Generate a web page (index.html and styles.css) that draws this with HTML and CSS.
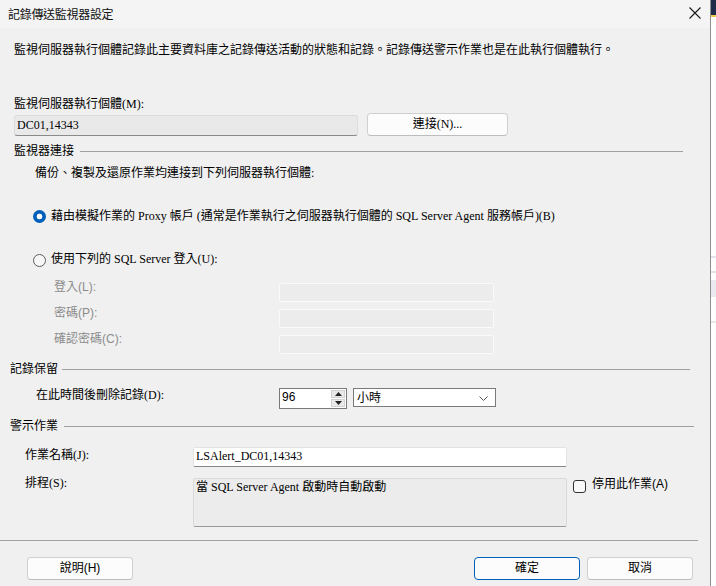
FILE: index.html
```html
<!DOCTYPE html>
<html lang="zh-Hant">
<head>
<meta charset="utf-8">
<title>記錄傳送監視器設定</title>
<link rel="stylesheet" href="styles.css">
</head>
<body>
<div class="screen">
  <div class="dialog">
    <div class="titlebar">
      <span class="title">記錄傳送監視器設定</span>
      <svg class="close" width="12" height="12" viewBox="0 0 12 12"><path d="M0.5 0.5 L11.5 11.5 M11.5 0.5 L0.5 11.5" stroke="#1a1a1a" stroke-width="1.1" fill="none"/></svg>
    </div>
    <div class="content">
      <p class="desc">監視伺服器執行個體記錄此主要資料庫之記錄傳送活動的狀態和記錄。記錄傳送警示作業也是在此執行個體執行。</p>
      <div class="label-m">監視伺服器執行個體(M):</div>
      <div class="server-row">
        <div class="readonly">DC01,14343</div>
        <div class="btn connect">連接(N)...</div>
      </div>

      <div class="group-head g1"><span>監視器連接</span></div>
      <div class="sub">備份、複製及還原作業均連接到下列伺服器執行個體:</div>
      <div class="radio-row r1">
        <span class="radio checked"></span>
        <span>藉由模擬作業的 Proxy 帳戶 (通常是作業執行之伺服器執行個體的 SQL Server Agent 服務帳戶)(B)</span>
      </div>
      <div class="radio-row r2">
        <span class="radio"></span>
        <span>使用下列的 SQL Server 登入(U):</span>
      </div>
      <div class="login-row first">
        <span class="dis-label">登入(L):</span>
        <span class="dis-input"></span>
      </div>
      <div class="login-row">
        <span class="dis-label">密碼(P):</span>
        <span class="dis-input"></span>
      </div>
      <div class="login-row">
        <span class="dis-label">確認密碼(C):</span>
        <span class="dis-input"></span>
      </div>

      <div class="group-head g2"><span>記錄保留</span></div>
      <div class="retain-row">
        <span class="retain-label">在此時間後刪除記錄(D):</span>
        <div class="spin">
          <span class="spin-value">96</span>
          <span class="spin-btns">
            <span class="spin-btn"><svg width="7" height="4" viewBox="0 0 7 4"><path d="M0 4 L3.5 0 L7 4 Z" fill="#222"/></svg></span>
            <span class="spin-btn"><svg width="7" height="4" viewBox="0 0 7 4"><path d="M0 0 L3.5 4 L7 0 Z" fill="#222"/></svg></span>
          </span>
        </div>
        <div class="combo">
          <span>小時</span>
          <svg width="9" height="5" viewBox="0 0 9 5"><path d="M0.5 0.5 L4.5 4.5 L8.5 0.5" stroke="#555" stroke-width="1" fill="none"/></svg>
        </div>
      </div>

      <div class="group-head g3"><span>警示作業</span></div>
      <div class="job-row">
        <span class="job-label">作業名稱(J):</span>
        <div class="job-input">LSAlert_DC01,14343</div>
      </div>
      <div class="sched-row">
        <span class="sched-label">排程(S):</span>
        <div class="sched-box">當 SQL Server Agent 啟動時自動啟動</div>
        <span class="checkbox"></span>
        <span class="check-text">停用此作業(A)</span>
      </div>
    </div>
    <div class="footer">
      <div class="sep"></div>
      <div class="buttons">
        <div class="btn help">說明(H)</div>
        <div class="btn ok">確定</div>
        <div class="btn cancel">取消</div>
      </div>
    </div>
  </div>
  <div class="backdrop">
    <div class="bd-top"></div>
    <div class="bd-yellow"></div>
    <div class="bd-line l1"></div>
    <div class="bd-line l2"></div>
    <div class="bd-block"></div>
    <div class="bd-line l3"></div>
  </div>
</div>
</body>
</html>
```

FILE: styles.css
```css
html, body {
  margin: 0;
  padding: 0;
  background: #ffffff;
}
body {
  font-family: "Liberation Serif", "Noto Sans CJK TC", serif;
  font-size: 12px;
  color: #000;
}
.screen {
  display: flex;
  width: 716px;
  height: 586px;
  overflow: hidden;
}
.dialog {
  width: 710px;
  flex: none;
  background: #f0f0f0;
  border-right: 1px solid #8e8e8e;
  display: flex;
  flex-direction: column;
}
.titlebar {
  height: 28px;
  background: #f4f4f4;
  display: flex;
  align-items: center;
  justify-content: space-between;
  padding: 0 9px 0 8px;
}
.title {
  font-family: "Noto Sans CJK TC", sans-serif;
  font-size: 12px;
  letter-spacing: -0.3px;
  color: #111;
  line-height: 16px;
}
.close {
  display: block;
  margin-top: -2px;
}
.content {
  display: flex;
  flex-direction: column;
  line-height: 16px;
}
.desc {
  margin: 14px 0 0 14px;
  line-height: 16px;
}
.label-m {
  margin: 38px 0 0 14px;
}
.server-row {
  margin: 1px 0 0 14px;
  display: flex;
  height: 23px;
}
.readonly {
  margin-top: 2px;
  width: 340px;
  height: 19px;
  background: #e9e9e9;
  border: 1px solid #dcdcdc;
  border-bottom-color: #8a8a8a;
  border-radius: 3px;
  padding-left: 2px;
  line-height: 18px;
}
.btn {
  height: 21px;
  border: 1px solid #d0d0d0;
  border-bottom-color: #bdbdbd;
  border-radius: 4px;
  background: #fcfcfc;
  text-align: center;
  line-height: 21px;
  font-family: "Liberation Sans", "Noto Sans CJK TC", sans-serif;
}
.connect {
  margin-left: 9px;
  width: 139px;
  font-family: "Liberation Serif", "Noto Sans CJK TC", serif;
}
.group-head {
  display: flex;
  align-items: center;
  height: 16px;
}
.group-head::after {
  content: "";
  flex: 1;
  height: 1px;
  background: #a0a0a0;
}
.g1 { margin: 7px 27px 0 14px; }
.g1::after { margin-left: 6px; }
.g2 { margin: 7px 20px 0 10px; }
.g2::after { margin-left: 4px; }
.g3 { margin: 9px 16px 0 10px; }
.g3::after { margin-left: 6px; }
.sub {
  margin: 6px 0 0 35px;
}
.radio-row {
  display: flex;
  align-items: center;
  height: 16px;
  margin-left: 33px;
  gap: 5px;
}
.r1 { margin-top: 27px; }
.r2 { margin-top: 27px; }
.radio {
  width: 11px;
  height: 11px;
  border: 1px solid #5c5c5c;
  border-radius: 50%;
  background: #f7f7f7;
  flex: none;
  margin-top: 2px;
}
.radio.checked {
  width: 13px;
  height: 13px;
  border: none;
  background: radial-gradient(circle, #ffffff 0 2.6px, #005fb8 3.2px);
  margin-top: 0;
}
.login-row {
  display: flex;
  align-items: flex-start;
  height: 19px;
  margin: 7px 0 0 54px;
}
.login-row.first { margin-top: 16px; }
.dis-label {
  width: 225px;
  color: #8c8c8c;
  margin-top: -4px;
  font-family: "Liberation Sans", "Noto Sans CJK TC", sans-serif;
}
.dis-input {
  width: 213px;
  height: 17px;
  border: 1px solid #fafafa;
  background: #ececec;
  border-radius: 2px;
}
.retain-row {
  display: flex;
  align-items: flex-start;
  margin: 11px 0 0 36px;
  height: 21px;
}
.retain-label {
  width: 243px;
  margin-top: -1px;
}
.spin {
  width: 66px;
  height: 19px;
  border: 1px solid #7a7a7a;
  background: #fff;
  display: flex;
  font-family: "Liberation Sans", "Noto Sans CJK TC", sans-serif;
}
.spin-value {
  flex: 1;
  padding-left: 2px;
  line-height: 16px;
}
.spin-btns {
  width: 14px;
  display: flex;
  flex-direction: column;
  gap: 1px;
  padding: 1px 1px 1px 0;
}
.spin-btn {
  flex: 1;
  background: #e9e9e9;
  border: 1px solid #d2d2d2;
  display: flex;
  align-items: center;
  justify-content: center;
}
.spin-btn svg { display: block; }
.combo {
  margin-left: 6px;
  width: 131px;
  height: 17px;
  border: 1px solid #7a7a7a;
  background: #fff;
  display: flex;
  align-items: center;
  justify-content: space-between;
  padding: 0 7px 0 3px;
  font-family: "Liberation Sans", "Noto Sans CJK TC", sans-serif;
}
.combo svg { display: block; margin-top: 1px; }
.job-row {
  display: flex;
  align-items: flex-start;
  margin: 13px 0 0 25px;
  height: 20px;
}
.job-label {
  width: 168px;
}
.job-input {
  width: 370px;
  height: 18px;
  background: #fff;
  border: 1px solid #e3e3e3;
  border-bottom-color: #868686;
  border-radius: 2px;
  padding-left: 2px;
  line-height: 17px;
}
.sched-row {
  display: flex;
  align-items: flex-start;
  margin: 11px 0 0 25px;
  height: 49px;
}
.sched-label {
  width: 168px;
  margin-top: -3px;
}
.sched-box {
  width: 370px;
  height: 47px;
  background: #ececec;
  border: 1px solid #dadada;
  border-bottom-color: #9a9a9a;
  border-radius: 2px;
  padding-left: 2px;
  line-height: 17px;
}
.checkbox {
  width: 11px;
  height: 11px;
  border: 1px solid #333;
  border-radius: 3px;
  background: #f9f9f9;
  margin: 2px 0 0 6px;
  flex: none;
}
.check-text {
  margin: -2px 0 0 6px;
  font-family: "Liberation Sans", "Noto Sans CJK TC", sans-serif;
}
.footer {
  display: flex;
  flex-direction: column;
}
.sep {
  margin-top: 13px;
  width: 698px;
  height: 1px;
  background: #a0a0a0;
}
.buttons {
  display: flex;
  margin-top: 16px;
}
.help { margin-left: 27px; width: 104px; }
.ok {
  margin-left: 341px;
  width: 104px;
  border-color: #005fb8;
}
.cancel { margin-left: 7px; width: 104px; }
.backdrop {
  flex: 1;
  background: #ffffff;
  display: flex;
  flex-direction: column;
}
.bd-top { height: 15px; background: #1d2a48; }
.bd-yellow { height: 2px; background: #f0c84a; }
.bd-line { height: 2px; background: #e2e2ea; }
.l1 { margin-top: 239px; }
.l2 { margin-top: 13px; }
.bd-block { margin-top: 7px; height: 17px; background: #e9e9ef; }
.l3 { margin-top: 24px; background: #e8e8e8; }
```
